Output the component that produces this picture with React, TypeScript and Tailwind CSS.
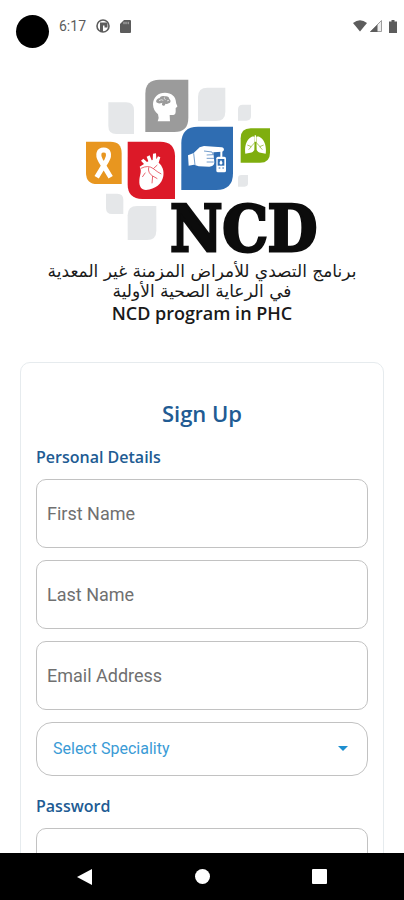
import type { ReactNode } from 'react';

function StatusBar() {
  return (
    <header className="flex h-[52px] shrink-0 items-start justify-between pl-4 pr-[7px] pt-[15px] text-[#5c5c5c]">
      <div className="flex items-start">
        <span className="size-[33px] rounded-full bg-black" />
        <div className="ml-[10px] flex h-[22px] items-center gap-[10px]">
          <span className="text-sm">6:17</span>
          <svg className="size-[14px]" viewBox="0 0 14 14" aria-hidden="true">
            <circle cx="7" cy="7" r="6" fill="none" stroke="currentColor" strokeWidth="1.6" />
            <path d="M4 3.5h7.5v5H8.5v-2H7V13H4z" fill="currentColor" />
          </svg>
          <svg className="h-[13px] w-[11px]" viewBox="0 0 11 13" aria-hidden="true">
            <path d="M4 0h6a1 1 0 0 1 1 1v11a1 1 0 0 1-1 1H1a1 1 0 0 1-1-1V4z" fill="currentColor" />
            <path d="M4 1.800v2.400M6 1.800v2.400M8.200 1.800v2.400" stroke="#bbb" strokeWidth="1" />
          </svg>
        </div>
      </div>
      <div className="flex h-[22px] items-center gap-[3px]">
        <svg className="h-[12px] w-[14px]" viewBox="0 0 14 12" aria-hidden="true">
          <path d="M0 3Q7-2.600 14 3L7 11.500z" fill="currentColor" />
        </svg>
        <svg className="size-[12px]" viewBox="0 0 12 12" aria-hidden="true">
          <path d="M11.500 .5V11.500H.5z" fill="#eee" stroke="#888" strokeWidth=".8" />
          <path d="M7.500 4.500V12H0z" fill="currentColor" />
        </svg>
        <svg className="ml-1 h-[13px] w-[8px]" viewBox="0 0 8 13" aria-hidden="true">
          <path d="M2.500 0h3v1.500H8V13H0V1.500h2.500z" fill="currentColor" />
        </svg>
      </div>
    </header>
  );
}

// Leaf-shaped tile: two opposite corners are rounded, the other two are square
function Leaf({ x, y, w, h, r, fill, flip = false }: {
  x: number;
  y: number;
  w: number;
  h: number;
  r: number;
  fill: string;
  flip?: boolean;
}) {
  const d = flip
    ? `M${x} ${y}h${w - r}q${r} 0 ${r} ${r}v${h - r}h${r - w}q${-r} 0 ${-r} ${-r}z`
    : `M${x + r} ${y}h${w - r}v${h - r}q0 ${r} ${-r} ${r}h${r - w}v${r - h}q0 ${-r} ${r} ${-r}z`;
  return <path d={d} fill={fill} />;
}

function Logo() {
  return (
    <svg className="h-[178px] w-[240px] overflow-visible" viewBox="36 24 720 534" role="img" aria-label="NCD">
      <Leaf x={115} y={97} w={77} h={95} r={24} fill="#e5e7e9" flip />
      <Leaf x={384} y={53} w={82} h={100} r={28} fill="#e5e7e9" />
      <Leaf x={504} y={104} w={39} h={48} r={14} fill="#e5e7e9" />
      <Leaf x={504} y={315} w={30} h={35} r={10} fill="#e5e7e9" />
      <Leaf x={108} y={371} w={52} h={61} r={18} fill="#e5e7e9" flip />
      <Leaf x={173} y={408} w={86} h={102} r={28} fill="#e5e7e9" />

      {/* Head */}
      <Leaf x={226} y={29} w={129} h={157} r={42} fill="#9b9b9b" />
      <path d="M263 154q5-12 1-21c-9-7-15-18-15-30 0-21 15-35 36-35 19 0 33 12 33 29 0 5 4 9 4 13l-5 4v11c0 8-5 10-11 10h-7l1 19z" fill="#fff" />
      <path d="M259 97c-2-7 4-12 9-12 3-7 11-9 16-6 8-2 14 2 14 8 6 4 4 12-2 13-4 3-8 2-10 1 0 5-5 8-9 5-2-3-1-6 1-8-7 2-13 4-19-1z" fill="#9b9b9b" />
      <path d="M267 92q7-5 13-1m3-9q-2 5 4 7m4 4q4-3 6-1" fill="none" stroke="#fff" strokeWidth="2" />

      {/* Ribbon */}
      <Leaf x={48} y={215} w={107} h={127} r={34} fill="#e8961f" flip />
      <path d="M80 322l30-50c11-19 5-32-9-32s-20 13-9 32l30 50" fill="none" stroke="#fff" strokeWidth="15" />

      {/* Heart */}
      <Leaf x={173} y={215} w={142} h={172} r={44} fill="#dc1928" flip />
      <path d="M209 290L222 282L213 272L220 266L231 276L235 274L230 260L239 256L245 271L248 270L249 251L258 250L259 268L264 259L271 262L266 278C277 287 283 302 280 318C276 342 256 357 228 360C214 360 207 348 208 333C208 315 217 305 209 290Z" fill="#fff" />
      <path d="M213 295Q235 284 250 296T274 312M236 292Q233 309 248 318L246 340M248 318L262 326M226 308L217 321M250 296L262 285" fill="none" stroke="#dc1928" strokeWidth="2" />

      {/* Finger on a glucose meter */}
      <Leaf x={334} y={170} w={155} h={190} r={50} fill="#2f6db2" />
      <path d="M354 256L371 249L389 232L402 228L455 232C464 233 464 244 456 245L430 247L433 277C433 286 426 290 418 290L386 289L372 284L356 287Z" fill="#fff" />
      <path d="M402 243L426 246L430 254L410 255M410 265H432M410 276H431M371 250L375 285" fill="none" stroke="#2f6db2" strokeWidth="2" />
      <path d="M454 243V263" stroke="#fff" strokeWidth="6" />
      <rect x="439" y="260" width="29" height="47" rx="5" fill="#fff" />
      <rect x="443" y="267" width="20" height="20" fill="#2f6db2" />
      <path d="M453 270q9 11 0 14-9-3 0-14" fill="#fff" />
      <path d="M446 294h5m6 0h5" stroke="#2f6db2" strokeWidth="3" />

      {/* Lungs */}
      <Leaf x={512} y={175} w={88} h={103} r={30} fill="#7fae0e" />
      <path d="M554 201l-1 39c-5 10-18 9-27 11-3-19 2-41 18-50 5-3 10-1 10 0zM559 201l1 39c5 10 18 9 27 11 3-19-2-41-18-50-5-3-10-1-10 0z" fill="#fff" />
      <path d="M556 216L543 230M557 216L570 230M532 225l12 5-8 9M581 225l-12 5 8 9" fill="none" stroke="#7fae0e" strokeWidth="2" />
      <path d="M556 196v19" stroke="#fff" strokeWidth="4" />

      {/* Stroke thickens the serifs into slabs */}
      <text
        x="301"
        y="544"
        fontSize="190"
        fontWeight="700"
        fill="#0c0c0c"
        stroke="#0c0c0c"
        strokeWidth="9"
        className="font-['DejaVu_Serif_Condensed','DejaVu_Serif',serif]"
      >
        NCD
      </text>
    </svg>
  );
}

function TextField({ label, type = 'text', placeholder }: { label: string; type?: string; placeholder?: string }) {
  return (
    <input
      type={type}
      aria-label={label}
      placeholder={placeholder}
      className="h-[69px] w-full rounded-[10px] border border-[#c2c2c2] bg-white px-[10px] text-lg text-gray-800 outline-none placeholder:text-[#707070]"
    />
  );
}

function SectionTitle({ children }: { children: ReactNode }) {
  return <h2 className="font-['Open_Sans',sans-serif] text-base leading-5 font-semibold text-[#215b93]">{children}</h2>;
}

function NavBar() {
  return (
    <nav className="flex h-[47px] shrink-0 items-center justify-center gap-[69px] bg-black">
      <button type="button" aria-label="Back" className="flex size-12 items-center justify-center">
        <svg className="size-4" viewBox="0 0 16 16" fill="#fff">
          <path d="M15 0v16L0 8z" />
        </svg>
      </button>
      <button type="button" aria-label="Home" className="flex size-12 items-center justify-center">
        <span className="size-[15px] rounded-full bg-white" />
      </button>
      <button type="button" aria-label="Recent apps" className="flex size-12 items-center justify-center">
        <span className="size-[15px] rounded-[1px] bg-white" />
      </button>
    </nav>
  );
}

export default function App() {
  return (
    <div className="flex h-screen flex-col bg-white font-[Roboto,sans-serif]">
      <StatusBar />

      <main className="min-h-0 flex-1 overflow-y-auto pt-[26px] [scrollbar-width:none]">
        <div className="flex flex-col items-center text-center text-[#1a1a1a]">
          <Logo />
          <p dir="rtl" lang="ar" className="mt-[5px] font-['DejaVu_Sans',sans-serif] text-[17px] leading-5">
            برنامج التصدي للأمراض المزمنة غير المعدية
            <br />
            في الرعاية الصحية الأولية
          </p>
          <p className="font-['Open_Sans',sans-serif] text-lg leading-[25px] font-semibold">NCD program in PHC</p>
        </div>

        <form className="mx-5 mt-9 rounded-[10px] border border-[#e6ebee] px-[15px] pt-9 pb-6">
          <h1 className="text-center font-['Open_Sans',sans-serif] text-[22px] leading-7 font-semibold text-[#215b93]">Sign Up</h1>

          <div className="mt-5 flex flex-col gap-3">
            <SectionTitle>Personal Details</SectionTitle>
            <TextField label="First Name" placeholder="First Name" />
            <TextField label="Last Name" placeholder="Last Name" />
            <TextField label="Email Address" type="email" placeholder="Email Address" />
            <div className="relative">
              <select
                aria-label="Speciality"
                className="h-[54px] w-full appearance-none rounded-2xl border border-[#c2c2c2] bg-white px-4 text-base text-[#3a9bd6] outline-none"
              >
                <option>Select Speciality</option>
              </select>
              <svg className="pointer-events-none absolute top-6 right-5 h-[5px] w-[10px]" viewBox="0 0 10 5" fill="#1e8fd0">
                <path d="M0 0h10L5 5z" />
              </svg>
            </div>
          </div>

          <div className="mt-5 flex flex-col gap-3">
            <SectionTitle>Password</SectionTitle>
            <TextField label="Password" type="password" />
          </div>
        </form>
      </main>

      <NavBar />
    </div>
  );
}
